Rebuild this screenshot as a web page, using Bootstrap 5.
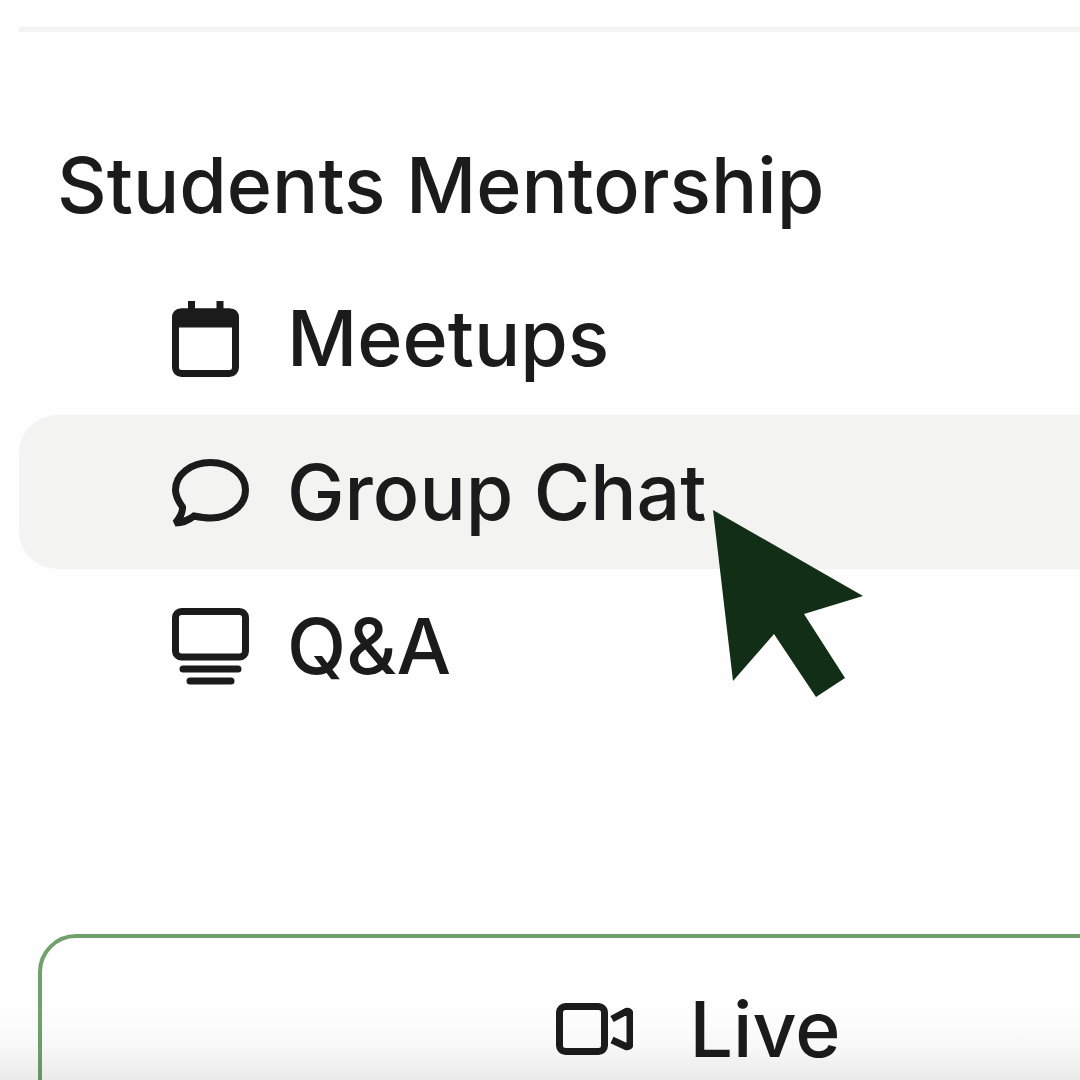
<!DOCTYPE html>
<html lang="en">
<head>
<meta charset="utf-8">
<meta name="viewport" content="width=device-width, initial-scale=1">
<title>Students Mentorship</title>
<link href="https://cdn.jsdelivr.net/npm/bootstrap@5.3.0/dist/css/bootstrap.min.css" rel="stylesheet">
<style>
  body { font-family: Inter, "Liberation Sans", sans-serif; font-size: 77px; font-weight: 500; line-height: 152px; color: #1b1b1b; background: #fefefe; }
  .side-panel { padding: 27px 0 0 19px; }
  .divider { height: 5px; margin: 0 0 77px; border: 0; background: #f1f4f1; opacity: 1; }
  .section-title { font-size: 77px; font-weight: 500; line-height: 152px; padding-left: 38px; }
  .side-link { height: 154px; padding-left: 153px; gap: 38px; color: inherit; border-radius: 38px 0 0 38px; }
  .side-link.active { background: #f3f3f1; }
  .side-link svg, .live-btn svg { width: 77px; height: 77px; flex: none; fill: none; stroke: #1b1b1b; stroke-width: 7; stroke-linecap: round; stroke-linejoin: round; }
  .pointer { left: 712px; top: 510px; width: 152px; height: 188px; fill: #132e16; }
  .live-area { margin: 211px -278px 0 19px; }
  .live-btn { height: 190px; gap: 57px; color: inherit; font-weight: 500; background: transparent; border: 4px solid #71a06c; border-radius: 38px; }
  .bottom-fade { height: 74px; background: linear-gradient(rgba(0,0,0,0), rgba(0,0,0,.02) 50%, rgba(0,0,0,.08)); pointer-events: none; }
</style>
<script src="https://cdn.jsdelivr.net/npm/bootstrap@5.3.0/dist/js/bootstrap.bundle.min.js"></script>
</head>
<body>
<main class="side-panel position-relative vh-100 overflow-hidden">
  <hr class="divider">
  <h1 class="section-title mb-0">Students Mentorship</h1>
  <nav class="d-flex flex-column" aria-label="Students Mentorship">
    <a class="side-link d-flex align-items-center text-decoration-none" href="#meetups">
      <svg viewBox="0 0 77 77" aria-hidden="true"><rect x="3.500" y="12" width="60" height="61.500" rx="6"/><path d="M3.500 24V18q0-6 6-6h48q6 0 6 6v6z" fill="#1b1b1b"/><path d="M19.500 1v11M48 1v11" stroke-linecap="butt"/></svg>
      <span>Meetups</span>
    </a>
    <a class="side-link active d-flex align-items-center text-decoration-none" href="#chat" aria-current="page">
      <svg viewBox="0 0 77 77" aria-hidden="true"><path d="M22 62C27 63 32 64 38.500 64C58 64 73.500 51.500 73.500 36S58 8.500 38.500 8.500S3.500 20.500 3.500 36C3.500 42.500 6.500 47.500 10.500 53C11 58.500 7 64.500 3.500 69C11 69 17 66 22 62z" stroke-linejoin="miter" stroke-miterlimit="2"/><path d="M10 60l-2 8 9-4" stroke-width="5"/></svg>
      <span>Group Chat</span>
    </a>
    <a class="side-link d-flex align-items-center text-decoration-none" href="#qa">
      <svg viewBox="0 0 77 77" aria-hidden="true"><rect x="3.500" y="3.500" width="70" height="45.500" rx="6"/><path d="M11 61h55M18 73h41"/></svg>
      <span>Q&amp;A</span>
    </a>
  </nav>
  <div class="live-area d-grid">
    <button class="live-btn d-flex align-items-center justify-content-center p-0" type="button">
      <svg viewBox="0 0 77 77" aria-hidden="true"><rect x="3.500" y="15.500" width="45" height="45" rx="6"/><path d="M56 28l14-7.500q4-1 4 3v29q0 4-4 3L56 49" stroke-linecap="butt"/></svg>
      <span>Live</span>
    </button>
  </div>
  <svg class="pointer position-absolute" viewBox="0 0 152 188" aria-hidden="true"><path d="M1 0L151 86L92 104L133 168L104 187L62 124L21 171z"/></svg>
  <div class="bottom-fade position-absolute bottom-0 start-0 end-0"></div>
</main>
</body>
</html>
